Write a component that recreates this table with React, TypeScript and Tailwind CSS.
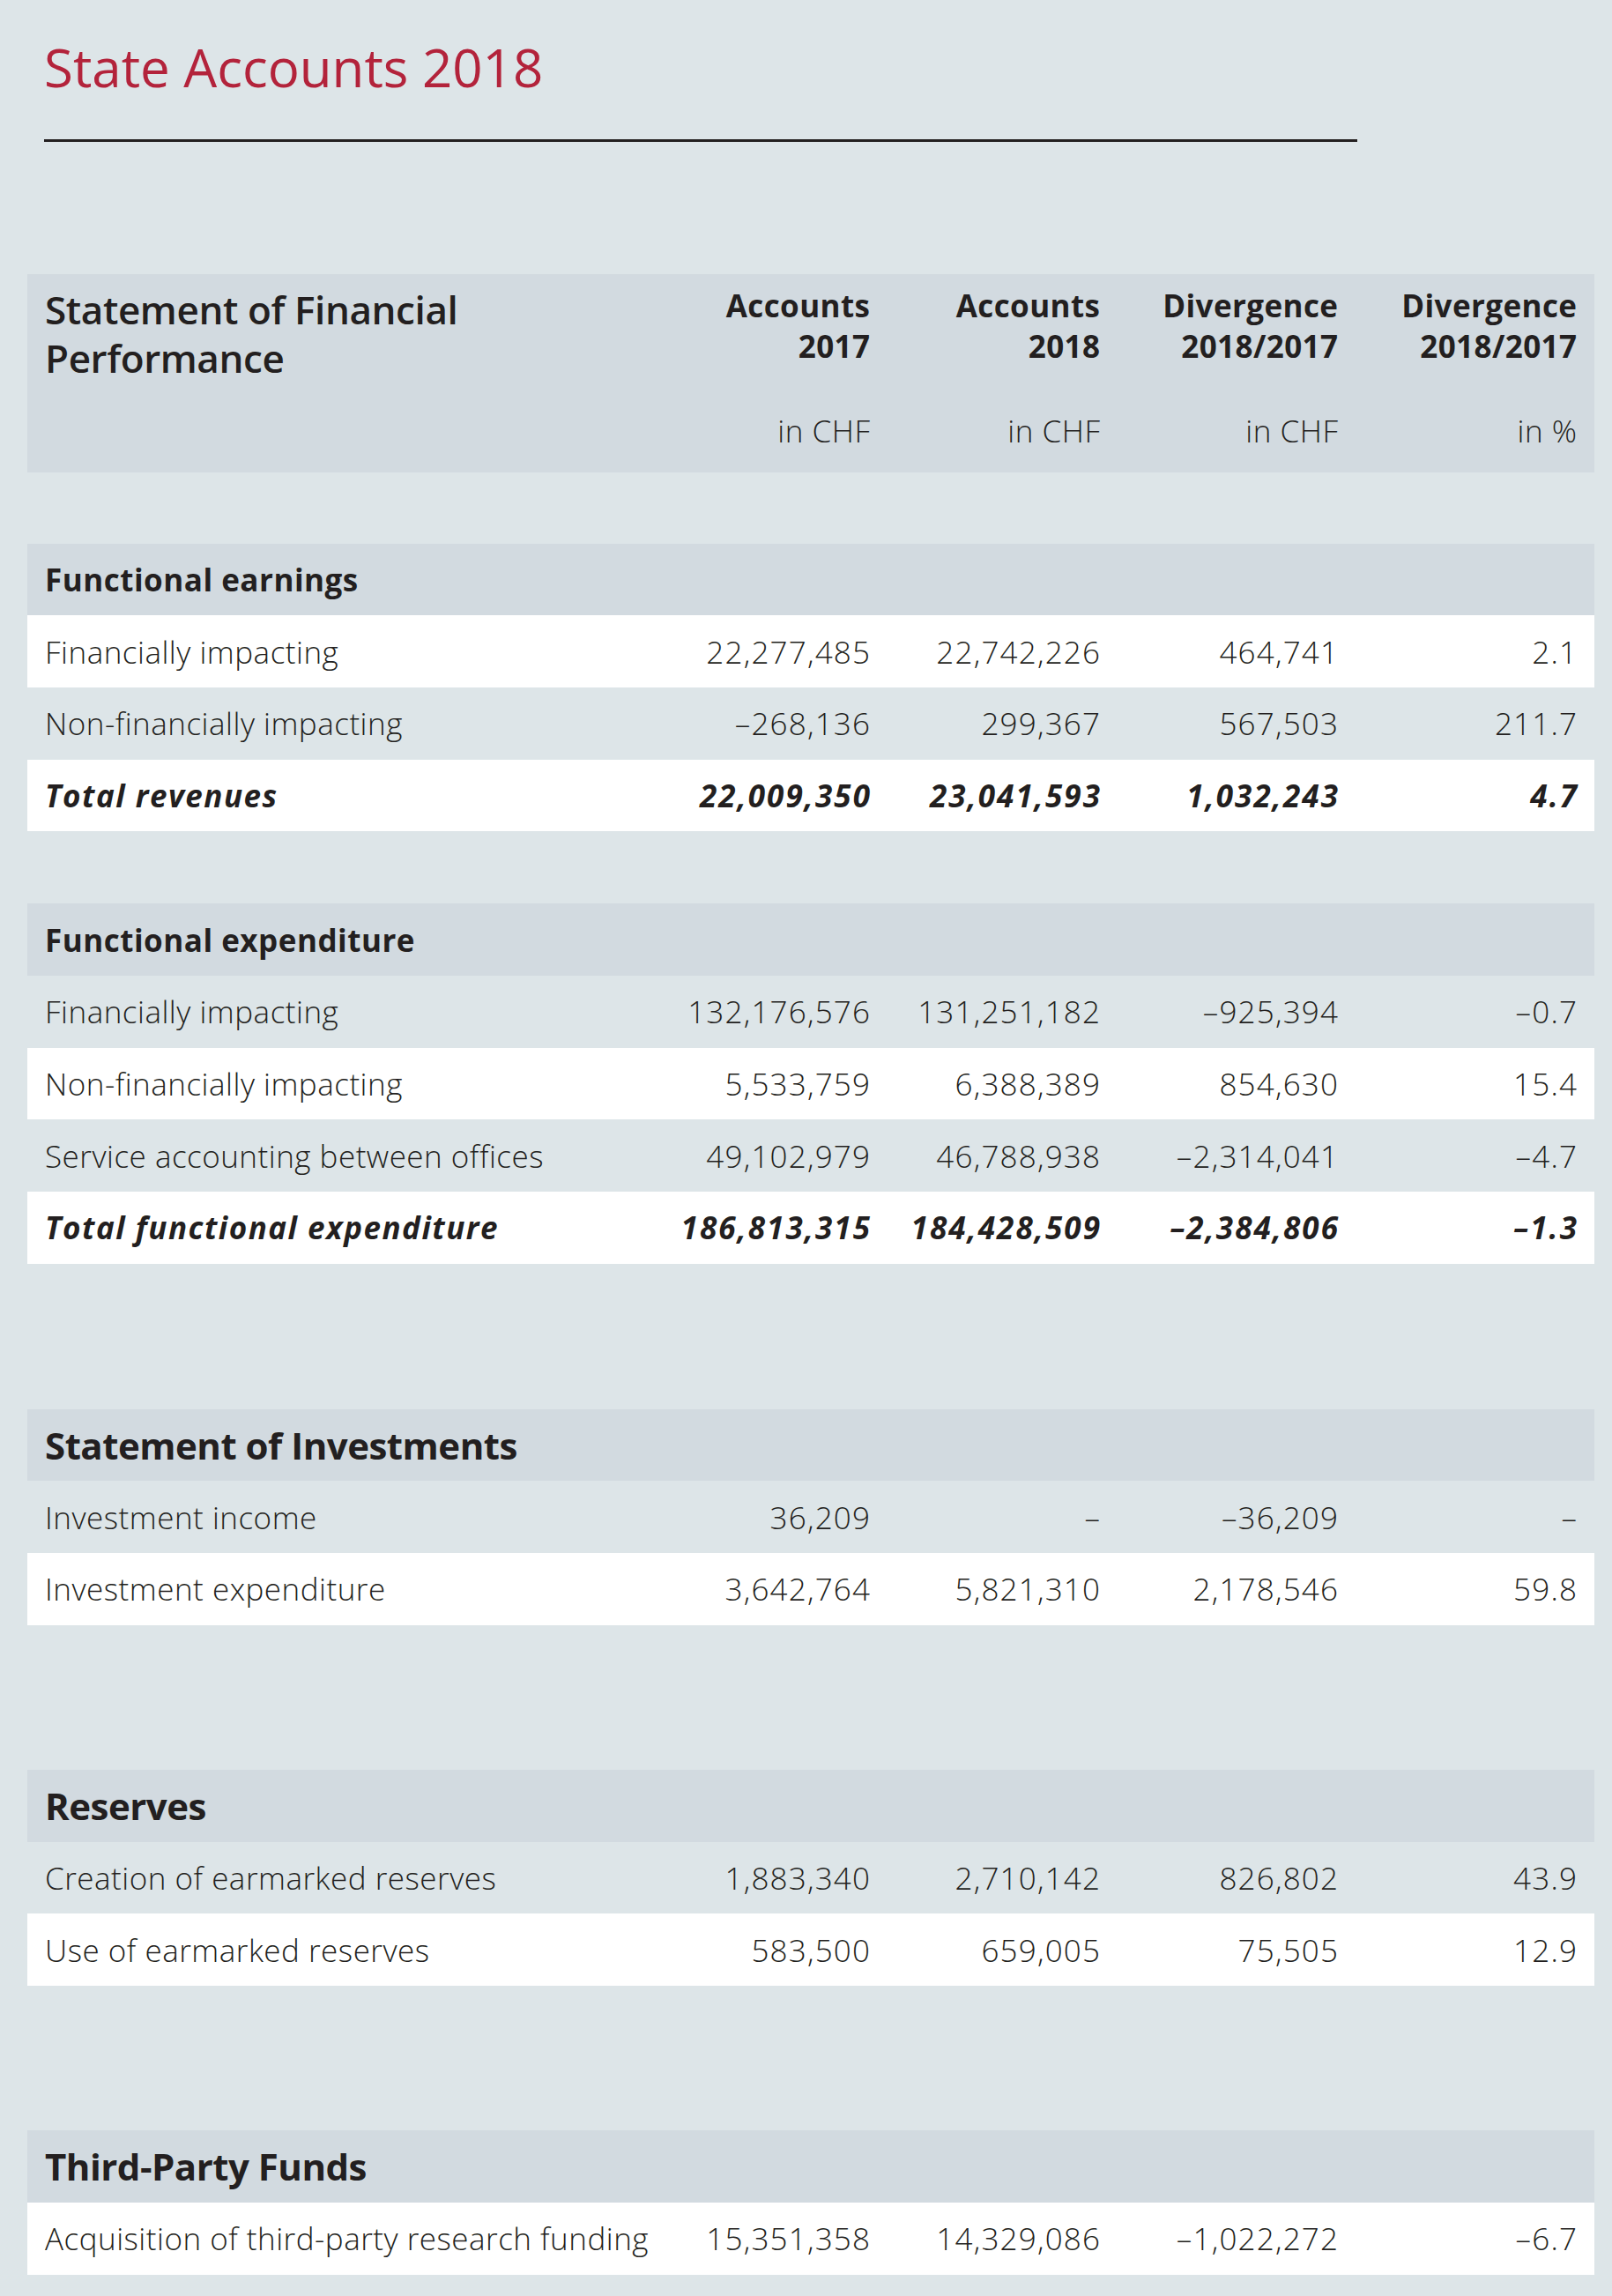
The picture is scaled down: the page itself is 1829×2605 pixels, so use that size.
import React from "react";

type Row = { label: string; v: [string, string, string, string]; total?: boolean };
type Section = { title: string; big?: boolean; rows: Row[]; gapClass: string };

const sections: Section[] = [
  {
    title: "Functional earnings",
    gapClass: "mt-[80.5px]",
    rows: [
      { label: "Financially impacting", v: ["22,277,485", "22,742,226", "464,741", "2.1"] },
      { label: "Non-financially impacting", v: ["–268,136", "299,367", "567,503", "211.7"] },
      { label: "Total revenues", v: ["22,009,350", "23,041,593", "1,032,243", "4.7"], total: true },
    ],
  },
  {
    title: "Functional expenditure",
    gapClass: "mt-[82px]",
    rows: [
      { label: "Financially impacting", v: ["132,176,576", "131,251,182", "–925,394", "–0.7"] },
      { label: "Non-financially impacting", v: ["5,533,759", "6,388,389", "854,630", "15.4"] },
      { label: "Service accounting between offices", v: ["49,102,979", "46,788,938", "–2,314,041", "–4.7"] },
      { label: "Total functional expenditure", v: ["186,813,315", "184,428,509", "–2,384,806", "–1.3"], total: true },
    ],
  },
  {
    title: "Statement of Investments",
    big: true,
    gapClass: "mt-[165px]",
    rows: [
      { label: "Investment income", v: ["36,209", "–", "–36,209", "–"] },
      { label: "Investment expenditure", v: ["3,642,764", "5,821,310", "2,178,546", "59.8"] },
    ],
  },
  {
    title: "Reserves",
    big: true,
    gapClass: "mt-[164.3px]",
    rows: [
      { label: "Creation of earmarked reserves", v: ["1,883,340", "2,710,142", "826,802", "43.9"] },
      { label: "Use of earmarked reserves", v: ["583,500", "659,005", "75,505", "12.9"] },
    ],
  },
  {
    title: "Third-Party Funds",
    big: true,
    gapClass: "mt-[164.3px]",
    rows: [
      { label: "Acquisition of third-party research funding", v: ["15,351,358", "14,329,086", "–1,022,272", "–6.7"] },
    ],
  },
];

const GRID = "grid grid-cols-[minmax(0,1fr)_260px_261px_270px_271px] px-[20px]";

function SectionBlock({ s }: { s: Section }) {
  const n = s.rows.length;
  return (
    <div className={s.gapClass}>
      <div className={`${GRID} h-[81.7px] items-center bg-[#d2dae0]`}>
        <div
          className={
            s.big
              ? "whitespace-nowrap text-[42px] font-bold leading-none tracking-[-0.5px]"
              : "whitespace-nowrap text-[35px] font-bold leading-none tracking-[0.5px]"
          }
        >
          {s.title}
        </div>
      </div>
      {s.rows.map((r, i) => {
        const white = (n - 1 - i) % 2 === 0;
        const lbl = r.total
          ? "font-bold italic tracking-[1.5px]"
          : "font-light tracking-[0.5px]";
        const num = r.total
          ? "font-bold italic tracking-[2.1px] mr-[-2.1px]"
          : "font-light tracking-[1.2px] mr-[-1.2px]";
        return (
          <div
            key={i}
            className={`${GRID} h-[81.7px] items-center text-[35px] leading-none ${
              white ? "bg-white" : "bg-[#dde5e8]"
            }`}
          >
            <div className={`whitespace-nowrap ${lbl}`}>{r.label}</div>
            {r.v.map((x, j) => (
              <div key={j} className={`whitespace-nowrap text-right ${num}`}>
                {x}
              </div>
            ))}
          </div>
        );
      })}
    </div>
  );
}

export default function App() {
  return (
    <div className="min-h-[2605px] w-full bg-[#dde5e8] font-['Open_Sans',sans-serif] text-[#231f20]">
      <div className="pl-[50px] pt-[46px]">
        <h1 className="text-[60px] font-normal leading-[60px] text-[#b3233b]">State Accounts 2018</h1>
        <div className="mt-[52px] h-[3px] w-[1490px] bg-[#231f20]" />
      </div>

      <div className="ml-[31px] w-[1778px] mt-[150px] pb-[25px]">
        <div className={`${GRID} h-[225px] items-start bg-[#d2dae0] pt-[13px]`}>
          <div className="text-[44px] font-semibold leading-[55px] tracking-[-0.4px]">
            <div>Statement of Financial</div>
            <div>Performance</div>
          </div>
          {[
            ["Accounts", "2017", "in CHF"],
            ["Accounts", "2018", "in CHF"],
            ["Divergence", "2018/2017", "in CHF"],
            ["Divergence", "2018/2017", "in %"],
          ].map((h, i) => (
            <div key={i} className="text-right text-[35px] leading-[46px]">
              <div className="font-bold tracking-[0.4px] mr-[-0.4px]">{h[0]}</div>
              <div className="font-bold tracking-[0.4px] mr-[-0.4px]">{h[1]}</div>
              <div className="mt-[50px] font-light tracking-[0.5px] mr-[-0.5px]">{h[2]}</div>
            </div>
          ))}
        </div>

        {sections.map((s, i) => (
          <SectionBlock key={i} s={s} />
        ))}
      </div>
    </div>
  );
}
